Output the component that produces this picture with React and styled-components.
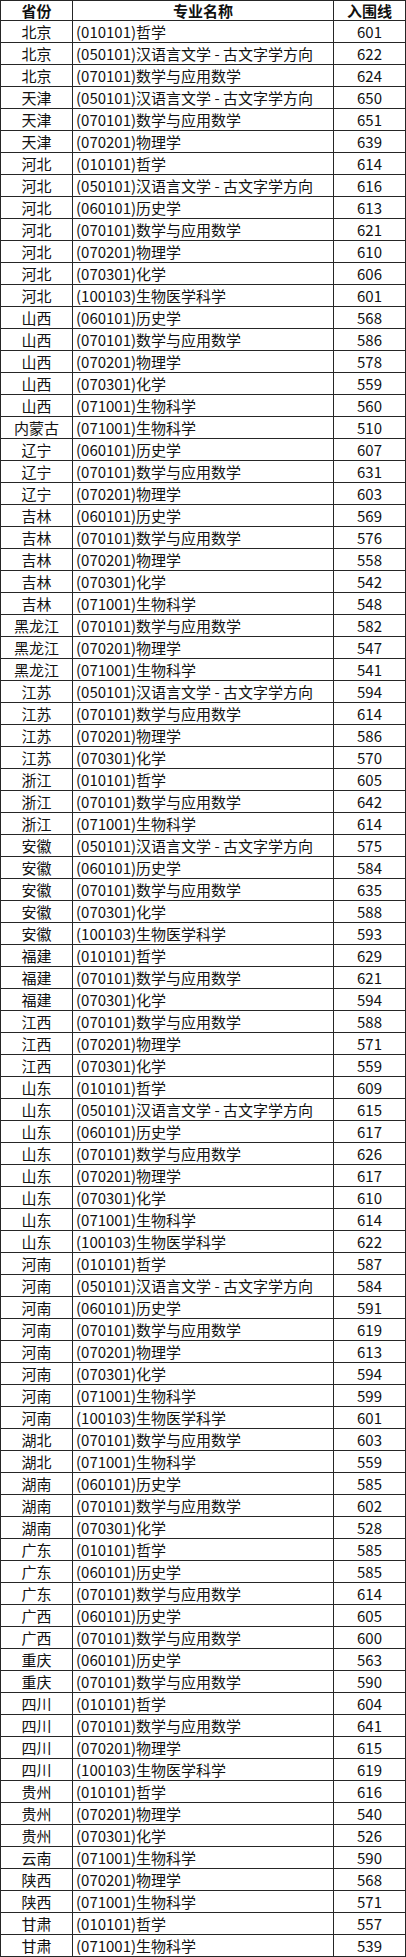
import React from 'react';
import styled, { createGlobalStyle } from 'styled-components';

const GlobalStyle = createGlobalStyle`
  html, body {
    margin: 0;
    padding: 0;
    background: #fff;
  }
  body {
    font-family: "Noto Sans CJK SC", "Noto Sans", sans-serif;
    color: #000;
  }
`;

const MAJORS = {
  zx: '(010101)哲学',
  hy: '(050101)汉语言文学 - 古文字学方向',
  ls: '(060101)历史学',
  sx: '(070101)数学与应用数学',
  wl: '(070201)物理学',
  hx: '(070301)化学',
  sw: '(071001)生物科学',
  yx: '(100103)生物医学科学',
};

const rows = [
  ['北京', 'zx', 601], ['北京', 'hy', 622], ['北京', 'sx', 624],
  ['天津', 'hy', 650], ['天津', 'sx', 651], ['天津', 'wl', 639],
  ['河北', 'zx', 614], ['河北', 'hy', 616], ['河北', 'ls', 613], ['河北', 'sx', 621],
  ['河北', 'wl', 610], ['河北', 'hx', 606], ['河北', 'yx', 601],
  ['山西', 'ls', 568], ['山西', 'sx', 586], ['山西', 'wl', 578], ['山西', 'hx', 559], ['山西', 'sw', 560],
  ['内蒙古', 'sw', 510],
  ['辽宁', 'ls', 607], ['辽宁', 'sx', 631], ['辽宁', 'wl', 603],
  ['吉林', 'ls', 569], ['吉林', 'sx', 576], ['吉林', 'wl', 558], ['吉林', 'hx', 542], ['吉林', 'sw', 548],
  ['黑龙江', 'sx', 582], ['黑龙江', 'wl', 547], ['黑龙江', 'sw', 541],
  ['江苏', 'hy', 594], ['江苏', 'sx', 614], ['江苏', 'wl', 586], ['江苏', 'hx', 570],
  ['浙江', 'zx', 605], ['浙江', 'sx', 642], ['浙江', 'sw', 614],
  ['安徽', 'hy', 575], ['安徽', 'ls', 584], ['安徽', 'sx', 635], ['安徽', 'hx', 588], ['安徽', 'yx', 593],
  ['福建', 'zx', 629], ['福建', 'sx', 621], ['福建', 'hx', 594],
  ['江西', 'sx', 588], ['江西', 'wl', 571], ['江西', 'hx', 559],
  ['山东', 'zx', 609], ['山东', 'hy', 615], ['山东', 'ls', 617], ['山东', 'sx', 626],
  ['山东', 'wl', 617], ['山东', 'hx', 610], ['山东', 'sw', 614], ['山东', 'yx', 622],
  ['河南', 'zx', 587], ['河南', 'hy', 584], ['河南', 'ls', 591], ['河南', 'sx', 619],
  ['河南', 'wl', 613], ['河南', 'hx', 594], ['河南', 'sw', 599], ['河南', 'yx', 601],
  ['湖北', 'sx', 603], ['湖北', 'sw', 559],
  ['湖南', 'ls', 585], ['湖南', 'sx', 602], ['湖南', 'hx', 528],
  ['广东', 'zx', 585], ['广东', 'ls', 585], ['广东', 'sx', 614],
  ['广西', 'ls', 605], ['广西', 'sx', 600],
  ['重庆', 'ls', 563], ['重庆', 'sx', 590],
  ['四川', 'zx', 604], ['四川', 'sx', 641], ['四川', 'wl', 615], ['四川', 'yx', 619],
  ['贵州', 'zx', 616], ['贵州', 'wl', 540], ['贵州', 'hx', 526],
  ['云南', 'sw', 590],
  ['陕西', 'wl', 568], ['陕西', 'sw', 571],
  ['甘肃', 'zx', 557], ['甘肃', 'sw', 539],
];

const Sheet = styled.div`
  width: 406px;
  box-sizing: border-box;
  border-top: 1px solid #262626;
  border-left: 1px solid #262626;
`;

const Row = styled.div`
  display: grid;
  grid-template-columns: 72px 261px 1fr;
  height: ${(p) => (p.$head ? 20 : 22)}px;
`;

const Cell = styled.div`
  box-sizing: border-box;
  border-right: 1px solid #262626;
  border-bottom: 1px solid #262626;
  display: flex;
  align-items: center;
  justify-content: ${(p) => (p.$left ? 'flex-start' : 'center')};
  padding-left: ${(p) => (p.$left ? '3px' : '0')};
  font-size: 15px;
  line-height: 20px;
  font-weight: ${(p) => (p.$head ? 700 : 400)};
  white-space: nowrap;
  overflow: hidden;
  color: #111;
`;

export default function App() {
  return (
    <>
      <GlobalStyle />
      <Sheet>
        <Row $head>
          <Cell $head>省份</Cell>
          <Cell $head>专业名称</Cell>
          <Cell $head>入围线</Cell>
        </Row>
        {rows.map(([prov, major, score], i) => (
          <Row key={i}>
            <Cell>{prov}</Cell>
            <Cell $left>{MAJORS[major]}</Cell>
            <Cell>{score}</Cell>
          </Row>
        ))}
      </Sheet>
    </>
  );
}
